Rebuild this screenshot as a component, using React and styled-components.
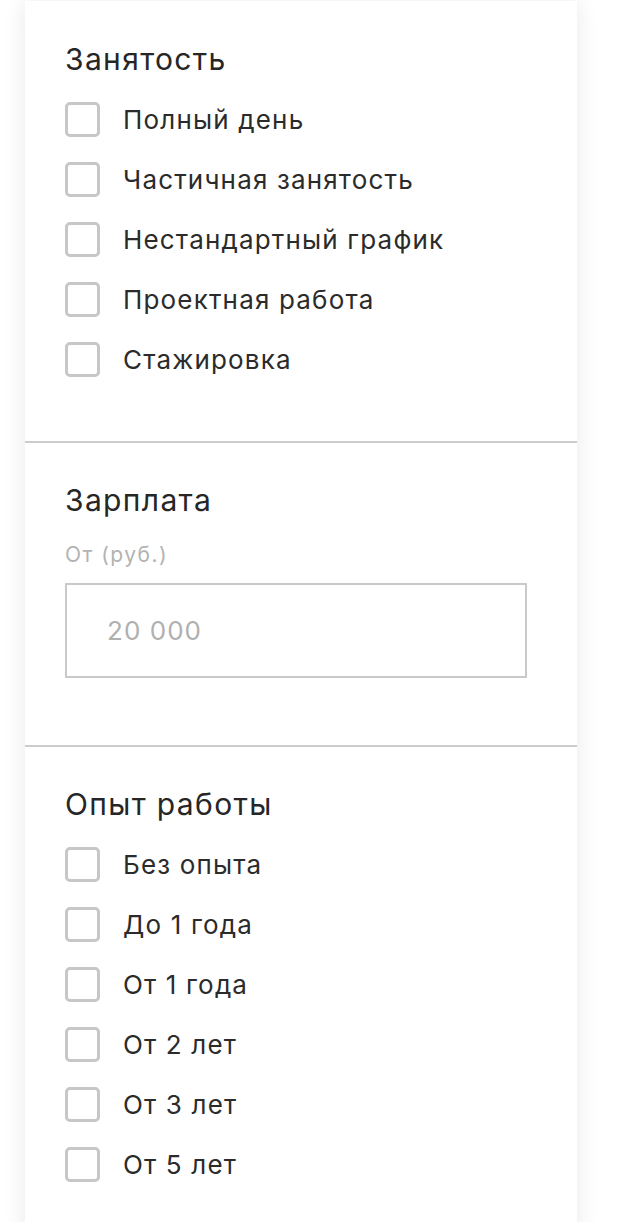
import React from "react";
import styled, { createGlobalStyle } from "styled-components";

const Global = createGlobalStyle`
  html, body { margin: 0; padding: 0; background: #fff; }
  body { font-family: Inter, "Noto Sans", sans-serif; color: #222; }
`;

const Page = styled.div`
  padding: 1px 0 0 25px;
`;

const Card = styled.div`
  width: 552px;
  background: #fff;
  box-shadow: 0 0 22px rgba(0, 0, 0, 0.09);
  min-height: 1240px;
`;

const Section = styled.section`
  padding: ${(p) => p.$pad};
  border-bottom: ${(p) => (p.$last ? "none" : "2px solid #cccccc")};
`;

const Title = styled.h3`
  margin: 0 0 ${(p) => (p.$flush ? 0 : 12)}px;
  font-size: 30px;
  line-height: 36px;
  font-weight: 400;
  letter-spacing: 0.045em;
  color: #262626;
`;

const List = styled.div`
  display: flex;
  flex-direction: column;
`;

const Row = styled.label`
  display: flex;
  align-items: center;
  height: 60px;
  gap: 23px;
  font-size: 26px;
  letter-spacing: 0.045em;
  color: #2b2b2b;
`;

const Box = styled.span`
  width: 35px;
  height: 35px;
  box-sizing: border-box;
  border: 3px solid #c6c7c9;
  border-radius: 5px;
  flex: none;
`;

const Hint = styled.div`
  margin-top: 25px;
  font-size: 21px;
  line-height: 24px;
  letter-spacing: 0.07em;
  color: #b3b3b3;
`;

const Input = styled.input`
  display: block;
  margin-top: 16px;
  width: 462px;
  height: 95px;
  box-sizing: border-box;
  border: 2px solid #c9c9c9;
  padding: 0 0 0 40px;
  font-family: Inter, "Noto Sans", sans-serif;
  font-size: 26px;
  letter-spacing: 0.04em;
  color: #333;
  outline: none;
  &::placeholder { color: #b0b0b0; }
`;

const employment = ["Полный день", "Частичная занятость", "Нестандартный график", "Проектная работа", "Стажировка"];
const experience = ["Без опыта", "До 1 года", "От 1 года", "От 2 лет", "От 3 лет", "От 5 лет"];

const Checks = ({ items }) => (
  <List>
    {items.map((t) => (
      <Row key={t}>
        <Box />
        {t}
      </Row>
    ))}
  </List>
);

export default function App() {
  return (
    <>
      <Global />
      <Page>
        <Card>
          <Section $pad="40px 40px 52px 40px">
            <Title>Занятость</Title>
            <Checks items={employment} />
          </Section>
          <Section $pad="39px 40px 67px 40px">
            <Title $flush>Зарплата</Title>
            <Hint>От (руб.)</Hint>
            <Input placeholder="20 000" />
          </Section>
          <Section $pad="39px 40px 40px 40px" $last>
            <Title>Опыт работы</Title>
            <Checks items={experience} />
          </Section>
        </Card>
      </Page>
    </>
  );
}
